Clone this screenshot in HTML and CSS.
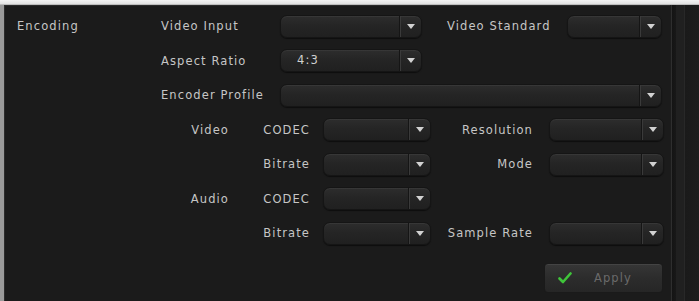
FILE: index.html
```html
<!DOCTYPE html>
<html lang="en">
<head>
  <meta charset="UTF-8" />
  <title>Encoding Settings</title>
  <link rel="stylesheet" href="styles.css">
</head>
<body>

<div class="frame">
  <div class="panel">
    <!-- top rows -->
    <div class="row">
      <div class="section">Encoding</div>
      <div class="label">Video Input</div>
      <div class="select w-main"><span class="value"></span><span class="arrow"></span></div>
      <div class="label std">Video Standard</div>
      <div class="select w-std"><span class="value"></span><span class="arrow"></span></div>
    </div>
    <div class="row">
      <div class="section"></div>
      <div class="label">Aspect Ratio</div>
      <div class="select w-main"><span class="value">4:3</span><span class="arrow"></span></div>
    </div>
    <div class="row">
      <div class="section"></div>
      <div class="label">Encoder Profile</div>
      <div class="select w-wide"><span class="value"></span><span class="arrow"></span></div>
    </div>

    <!-- video / audio rows -->
    <div class="row">
      <div class="section"></div>
      <div class="sub">Video</div>
      <div class="label-r">CODEC</div>
      <div class="select w-small"><span class="value"></span><span class="arrow"></span></div>
      <div class="label-r2">Resolution</div>
      <div class="select w-right"><span class="value"></span><span class="arrow"></span></div>
    </div>
    <div class="row">
      <div class="section"></div>
      <div class="sub"></div>
      <div class="label-r">Bitrate</div>
      <div class="select w-small"><span class="value"></span><span class="arrow"></span></div>
      <div class="label-r2">Mode</div>
      <div class="select w-right"><span class="value"></span><span class="arrow"></span></div>
    </div>
    <div class="row">
      <div class="section"></div>
      <div class="sub">Audio</div>
      <div class="label-r">CODEC</div>
      <div class="select w-small"><span class="value"></span><span class="arrow"></span></div>
    </div>
    <div class="row">
      <div class="section"></div>
      <div class="sub"></div>
      <div class="label-r">Bitrate</div>
      <div class="select w-small"><span class="value"></span><span class="arrow"></span></div>
      <div class="label-r2">Sample Rate</div>
      <div class="select w-right"><span class="value"></span><span class="arrow"></span></div>
    </div>

    <div class="actions">
      <button class="apply" disabled>
        <svg class="check" width="14" height="12" viewBox="0 0 14 12">
          <path d="M1.5 6.5 L5 10 L12.5 1.5" fill="none" stroke="#3fc43a" stroke-width="2.6" stroke-linecap="round" stroke-linejoin="round"/>
        </svg>
        <span>Apply</span>
      </button>
    </div>
  </div>
  <div class="strip"></div>
</div>

</body>
</html>
```

FILE: styles.css
```css
* {
  box-sizing: border-box;
  margin: 0;
  padding: 0;
}

body {
  background-color: #e6e6e6;
  font-family: "DejaVu Sans", Verdana, sans-serif;
  font-size: 11.5px;
  letter-spacing: 1.1px;
  color: #c6c6c6;
  width: 699px;
  height: 301px;
  overflow: hidden;
}

.frame {
  display: flex;
  height: 301px;
  padding-top: 5px;
  padding-left: 4px;
  background: linear-gradient(#f4f4f4, #e2e2e2 4px, #9a9a9a 5px);
  background-color: #c4c4c4;
}

.panel {
  width: 666px;
  background-color: #1b1b1b;
  padding-top: 3px;
  border-left: 1px solid #2c2c2c;
  border-top: 1px solid #2a2a2a;
}

.strip {
  flex: 1;
  background:
    linear-gradient(to right,
      #1c1c1c 0, #1c1c1c 1px,
      #2e2e2e 1px, #2e2e2e 2px,
      #141414 2px, #181818 6px,
      #202020 6px, #202020 14px,
      #282828 14px, #282828 15px,
      #1a1a1a 15px, #1d1d1d 100%);
}

.row {
  display: flex;
  align-items: center;
  height: 34.5px;
}

.section {
  width: 156px;
  padding-left: 12px;
  flex-shrink: 0;
}

.label {
  width: 119px;
  flex-shrink: 0;
}

.label.std {
  width: 120px;
  margin-left: 25px;
}

.sub {
  width: 68px;
  text-align: right;
  flex-shrink: 0;
}

.label-r {
  width: 81px;
  margin-right: 13px;
  text-align: right;
  flex-shrink: 0;
}

.label-r2 {
  width: 102px;
  margin-right: 16px;
  text-align: right;
  flex-shrink: 0;
}

/* dropdown */
.select {
  display: flex;
  height: 23px;
  border-radius: 7px;
  border: 1px solid #151515;
  background: linear-gradient(#2d2d2d, #252525 45%, #202020);
  box-shadow: inset 0 1px 0 rgba(255, 255, 255, 0.05), 0 1px 1px rgba(0, 0, 0, 0.5);
  flex-shrink: 0;
}

.select .value {
  flex: 1;
  padding-left: 16px;
  line-height: 21px;
  color: #d0d0d0;
}

.select .arrow {
  width: 22px;
  border-left: 1px solid #151515;
  box-shadow: inset 1px 0 0 #3a3a3a;
  position: relative;
}

.select .arrow::after {
  content: "";
  position: absolute;
  left: 7px;
  top: 8px;
  border-left: 4px solid transparent;
  border-right: 4px solid transparent;
  border-top: 5px solid #d2d2d2;
}

.w-main { width: 142px; }
.w-std { width: 95px; }
.w-wide { width: 382px; }
.w-small { width: 108px; }
.w-right { width: 115px; }

.actions {
  display: flex;
  justify-content: flex-end;
  padding-right: 7px;
  margin-top: 12px;
}

.apply {
  display: flex;
  align-items: center;
  width: 119px;
  height: 30px;
  padding-left: 13px;
  border-radius: 4px;
  border: 1px solid #1a1a1a;
  background: linear-gradient(#363636, #2c2c2c 50%, #262626);
  box-shadow: inset 0 1px 0 rgba(255, 255, 255, 0.07);
  font-family: inherit;
  font-size: 11.5px;
  letter-spacing: 1.1px;
  color: #6a6a6a;
}

.apply .check {
  margin-right: 22px;
}
```
